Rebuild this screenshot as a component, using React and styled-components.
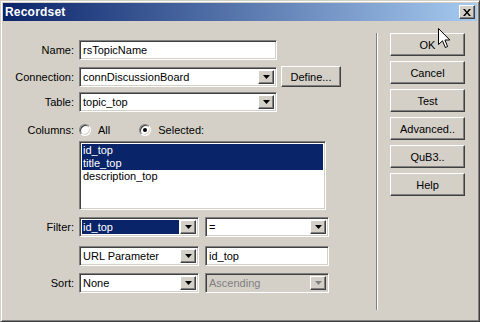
import styled, { createGlobalStyle } from 'styled-components';

const GlobalStyle = createGlobalStyle`
  html, body {
    margin: 0;
    padding: 0;
    background: #d4d0c8;
  }
  body {
    font-family: 'Liberation Sans', Arial, sans-serif;
    font-size: 11px;
    color: #000;
  }
`;

const sunken = `
  box-sizing: border-box;
  border: 1px solid;
  border-color: #808080 #fff #fff #808080;
  box-shadow: inset 1px 1px #404040, inset -1px -1px #d4d0c8;
`;

const raised = `
  box-sizing: border-box;
  border: 1px solid;
  border-color: #fff #404040 #404040 #fff;
  box-shadow: inset -1px -1px #808080, inset 1px 1px #d4d0c8;
  background: #d4d0c8;
`;

const Window = styled.div`
  position: relative;
  width: 480px;
  height: 322px;
  box-sizing: border-box;
  background: #d4d0c8;
  border: 1px solid;
  border-color: #d4d0c8 #404040 #404040 #d4d0c8;
  box-shadow: inset 1px 1px #fff, inset -1px -1px #808080;
  padding: 2px;
  overflow: hidden;
`;

const TitleBar = styled.div`
  height: 18px;
  display: flex;
  align-items: center;
  justify-content: space-between;
  background: linear-gradient(to right, #0a246a, #a6caf0);
  padding: 0 2px 0 2px;
`;

const Title = styled.span`
  color: #fff;
  font-weight: bold;
  font-size: 12px;
  letter-spacing: 0.2px;
`;

const CloseButton = styled.div`
  ${raised}
  width: 16px;
  height: 14px;
  display: flex;
  align-items: center;
  justify-content: center;
`;

const Body = styled.div`
  display: flex;
  padding-top: 12px;
`;

const Form = styled.div`
  width: 372px;
  display: flex;
  flex-direction: column;
`;

const Row = styled.div`
  display: grid;
  grid-template-columns: 71px auto;
  column-gap: 5px;
  align-items: center;
  margin-top: ${p => p.$mt || 0}px;
  height: ${p => p.$h || 20}px;
`;

const Label = styled.span`
  text-align: right;
  white-space: nowrap;
`;

const Controls = styled.div`
  display: flex;
  align-items: center;
  gap: ${p => p.$gap || 6}px;
`;

const TextBox = styled.div`
  ${sunken}
  width: ${p => p.$w}px;
  height: 20px;
  background: #fff;
  padding: 0 3px;
  display: flex;
  align-items: center;
`;

const SelectBox = styled.div`
  ${sunken}
  width: ${p => p.$w}px;
  height: 20px;
  padding: 2px;
  display: flex;
  background: ${p => (p.$disabled ? '#d4d0c8' : '#fff')};
`;

const SelectText = styled.div`
  flex: 1;
  display: flex;
  align-items: center;
  padding: 0 1px;
  margin: 0 1px 0 0;
  color: ${p => (p.$disabled ? '#808080' : p.$focused ? '#fff' : '#000')};
  background: ${p => (p.$focused ? '#0a246a' : 'transparent')};
`;

const ArrowButton = styled.div`
  ${raised}
  width: 16px;
  display: flex;
  align-items: center;
  justify-content: center;
`;

const PushButton = styled.div`
  ${raised}
  width: ${p => p.$w || 75}px;
  height: ${p => p.$h || 23}px;
  display: flex;
  align-items: center;
  justify-content: center;
`;

const RadioGroup = styled.div`
  display: flex;
  align-items: center;
`;

const RadioItem = styled.label`
  display: flex;
  align-items: center;
  gap: 7px;
  margin-right: 29px;
`;

const RadioCircle = styled.span`
  position: relative;
  width: 12px;
  height: 12px;
  box-sizing: border-box;
  border-radius: 50%;
  border: 1px solid;
  border-color: #808080 #fff #fff #808080;
  box-shadow: inset 1px 1px #404040, inset -1px -1px #d4d0c8;
  background: #fff;

  &::after {
    content: '';
    display: ${p => (p.$checked ? 'block' : 'none')};
    position: absolute;
    left: 3px;
    top: 3px;
    width: 4px;
    height: 4px;
    border-radius: 50%;
    background: #000;
  }
`;

const ListBox = styled.div`
  ${sunken}
  width: 247px;
  height: 69px;
  background: #fff;
  padding: 2px;
`;

const ListItem = styled.div`
  height: 13px;
  line-height: 13px;
  padding-left: 1px;
  color: ${p => (p.$selected ? '#fff' : '#000')};
  background: ${p => (p.$selected ? '#0a246a' : 'transparent')};
`;

const Separator = styled.div`
  width: 0;
  height: 277px;
  margin: 0 12px 0 1px;
  border-left: 1px solid #808080;
  border-right: 1px solid #fff;
`;

const ButtonColumn = styled.div`
  display: flex;
  flex-direction: column;
  gap: 5px;
`;

const Cursor = styled.svg`
  position: absolute;
  left: 437px;
  top: 27px;
`;

const Arrow = ({ disabled }) => (
  <svg width="7" height="4" viewBox="0 0 7 4">
    <polygon points="0,0 7,0 3.5,4" fill={disabled ? '#808080' : '#000'} />
  </svg>
);

const Select = ({ w, value, focused, disabled }) => (
  <SelectBox $w={w} $disabled={disabled}>
    <SelectText $focused={focused} $disabled={disabled}>
      {value}
    </SelectText>
    <ArrowButton>
      <Arrow disabled={disabled} />
    </ArrowButton>
  </SelectBox>
);

const columns = [
  { name: 'id_top', selected: true },
  { name: 'title_top', selected: true },
  { name: 'description_top', selected: false },
];

const App = () => (
  <>
    <GlobalStyle />
    <Window>
      <TitleBar>
        <Title>Recordset</Title>
        <CloseButton>
          <svg width="8" height="7" viewBox="0 0 8 7">
            <path d="M0 0 L2 0 L4 2.5 L6 0 L8 0 L5 3.5 L8 7 L6 7 L4 4.5 L2 7 L0 7 L3 3.5 Z" fill="#000" />
          </svg>
        </CloseButton>
      </TitleBar>
      <Body>
        <Form>
          <Row $mt={7}>
            <Label>Name:</Label>
            <Controls>
              <TextBox $w={198}>rsTopicName</TextBox>
            </Controls>
          </Row>
          <Row $mt={6}>
            <Label>Connection:</Label>
            <Controls $gap={4}>
              <Select w={198} value="connDiscussionBoard" />
              <PushButton $w={60} $h={21}>Define...</PushButton>
            </Controls>
          </Row>
          <Row $mt={6}>
            <Label>Table:</Label>
            <Controls>
              <Select w={198} value="topic_top" />
            </Controls>
          </Row>
          <Row $mt={11} $h={14}>
            <Label>Columns:</Label>
            <RadioGroup>
              <RadioItem>
                <RadioCircle />
                All
              </RadioItem>
              <RadioItem>
                <RadioCircle $checked />
                Selected:
              </RadioItem>
            </RadioGroup>
          </Row>
          <Row $mt={4} $h={69}>
            <span />
            <ListBox>
              {columns.map(c => (
                <ListItem key={c.name} $selected={c.selected}>
                  {c.name}
                </ListItem>
              ))}
            </ListBox>
          </Row>
          <Row $mt={7}>
            <Label>Filter:</Label>
            <Controls>
              <Select w={120} value="id_top" focused />
              <Select w={124} value="=" />
            </Controls>
          </Row>
          <Row $mt={9}>
            <span />
            <Controls>
              <Select w={120} value="URL Parameter" />
              <TextBox $w={124}>id_top</TextBox>
            </Controls>
          </Row>
          <Row $mt={7}>
            <Label>Sort:</Label>
            <Controls>
              <Select w={120} value="None" />
              <Select w={124} value="Ascending" disabled />
            </Controls>
          </Row>
        </Form>
        <Separator />
        <ButtonColumn>
          <PushButton>OK</PushButton>
          <PushButton>Cancel</PushButton>
          <PushButton>Test</PushButton>
          <PushButton>Advanced..</PushButton>
          <PushButton>QuB3..</PushButton>
          <PushButton>Help</PushButton>
        </ButtonColumn>
      </Body>
      <Cursor width="13" height="21" viewBox="0 0 13 21">
        <path
          d="M0.5 0.5 L0.5 16.5 L4.5 12.8 L7.3 19.5 L9.6 18.5 L6.9 12 L11.8 12 Z"
          fill="#fff"
          stroke="#000"
          strokeWidth="1"
        />
      </Cursor>
    </Window>
  </>
);

export default App;
